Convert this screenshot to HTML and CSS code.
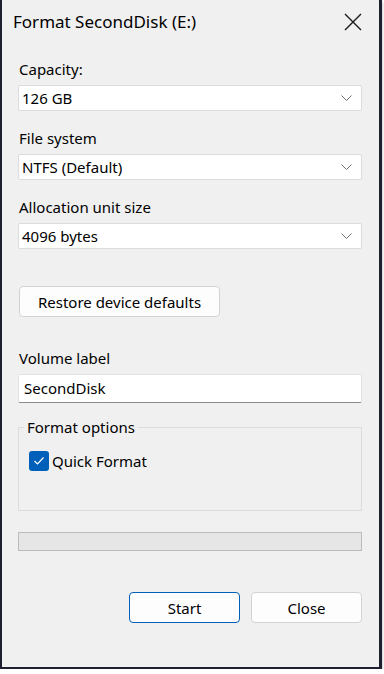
FILE: index.html
```html
<!DOCTYPE html>
<html lang="en">
<head>
<meta charset="utf-8">
<title>Format SecondDisk (E:)</title>
<link rel="stylesheet" href="styles.css">
</head>
<body>
<div class="window">
  <div class="titlebar">
    <span class="title">Format SecondDisk (E:)</span>
    <button class="close-x" aria-label="Close">
      <svg width="18" height="18" viewBox="0 0 18 18"><path d="M1 1 L17 17 M17 1 L1 17" stroke="#1a1a1a" stroke-width="1.4" fill="none"/></svg>
    </button>
  </div>
  <div class="content">
    <div class="field">
      <div class="label">Capacity:</div>
      <div class="select"><span>126 GB</span><svg class="chev" width="11" height="6" viewBox="0 0 11 6"><path d="M0.5 0.5 L5.5 5.5 L10.5 0.5" stroke="#707070" stroke-width="1" fill="none"/></svg></div>
    </div>
    <div class="field">
      <div class="label">File system</div>
      <div class="select"><span>NTFS (Default)</span><svg class="chev" width="11" height="6" viewBox="0 0 11 6"><path d="M0.5 0.5 L5.5 5.5 L10.5 0.5" stroke="#707070" stroke-width="1" fill="none"/></svg></div>
    </div>
    <div class="field">
      <div class="label">Allocation unit size</div>
      <div class="select"><span>4096 bytes</span><svg class="chev" width="11" height="6" viewBox="0 0 11 6"><path d="M0.5 0.5 L5.5 5.5 L10.5 0.5" stroke="#707070" stroke-width="1" fill="none"/></svg></div>
    </div>
    <button class="btn restore">Restore device defaults</button>
    <div class="field volume">
      <div class="label">Volume label</div>
      <div class="textbox">SecondDisk</div>
    </div>
    <fieldset class="group">
      <legend>Format options</legend>
      <div class="check-row">
        <span class="checkbox"><svg width="12" height="10" viewBox="0 0 12 10"><path d="M1.5 5 L4.5 8 L10.5 1.5" stroke="#ffffff" stroke-width="1.2" fill="none"/></svg></span>
        <span>Quick Format</span>
      </div>
    </fieldset>
    <div class="progress"></div>
    <div class="actions">
      <button class="btn primary">Start</button>
      <button class="btn">Close</button>
    </div>
  </div>
</div>
</body>
</html>
```
FILE: styles.css
```css
* { box-sizing: border-box; }
html, body { margin: 0; padding: 0; background: #ffffff; }
body {
  font-family: "Noto Sans", "Open Sans", sans-serif;
  font-size: 15px;
  color: #000;
}
.window {
  width: 382px;
  height: 669px;
  background: #f0f0f0;
  border-left: 2px solid #1e2030;
  border-right: 3px solid #1e2030;
  border-bottom: 2px solid #1e2030;
  box-shadow: 0 2px 3px rgba(0,0,0,0.35);
}
.titlebar {
  height: 43px;
  display: flex;
  align-items: center;
  justify-content: space-between;
  padding-left: 11px;
  padding-right: 17px;
}
.title { font-size: 17px; }
.close-x {
  background: none;
  border: 0;
  padding: 0;
  width: 18px;
  height: 18px;
  display: flex;
}
.content {
  padding: 16px 17px 0 16px;
}
.field { margin-bottom: 17px; }
.label {
  height: 20px;
  line-height: 20px;
  margin-bottom: 6px;
  padding-left: 1px;
}
.select {
  height: 26px;
  background: #ffffff;
  border: 1px solid #dcdcdc;
  border-radius: 2px;
  display: flex;
  align-items: center;
  justify-content: space-between;
  padding: 0 9px 0 3px;
}
.chev { display: block; }
.btn {
  font: inherit;
  color: #000;
  background: #fdfdfd;
  border: 1px solid #d3d3d3;
  border-radius: 4px;
  height: 31px;
  padding: 0;
}
.restore {
  display: block;
  width: 201px;
  height: 31px;
  margin: 37px 0 0 1px;
}
.volume { margin-top: 31px; margin-bottom: 14px; }
.textbox {
  height: 29px;
  background: #fff;
  border: 1px solid #e2e2e2;
  border-bottom-color: #8a8a8a;
  border-radius: 2px;
  line-height: 27px;
  padding-left: 5px;
}
.group {
  margin: 0;
  height: 94px;
  border: 1px solid #dcdcdc;
  padding: 0 0 0 10px;
}
.group legend {
  padding: 0 3px;
  margin-left: -5px;
  line-height: 20px;
}
.check-row {
  display: flex;
  align-items: center;
  gap: 3px;
  margin-top: 14px;
}
.checkbox {
  width: 20px;
  height: 20px;
  border-radius: 3px;
  background: #005fb8;
  display: flex;
  align-items: center;
  justify-content: center;
}
.checkbox svg { display: block; }
.progress {
  margin-top: 21px;
  height: 19px;
  background: #e6e6e6;
  border: 1px solid #bcbcbc;
}
.actions {
  display: flex;
  justify-content: flex-end;
  gap: 11px;
  margin-top: 41px;
}
.actions .btn { width: 111px; }
.primary { border-color: #005fb8; }
```
